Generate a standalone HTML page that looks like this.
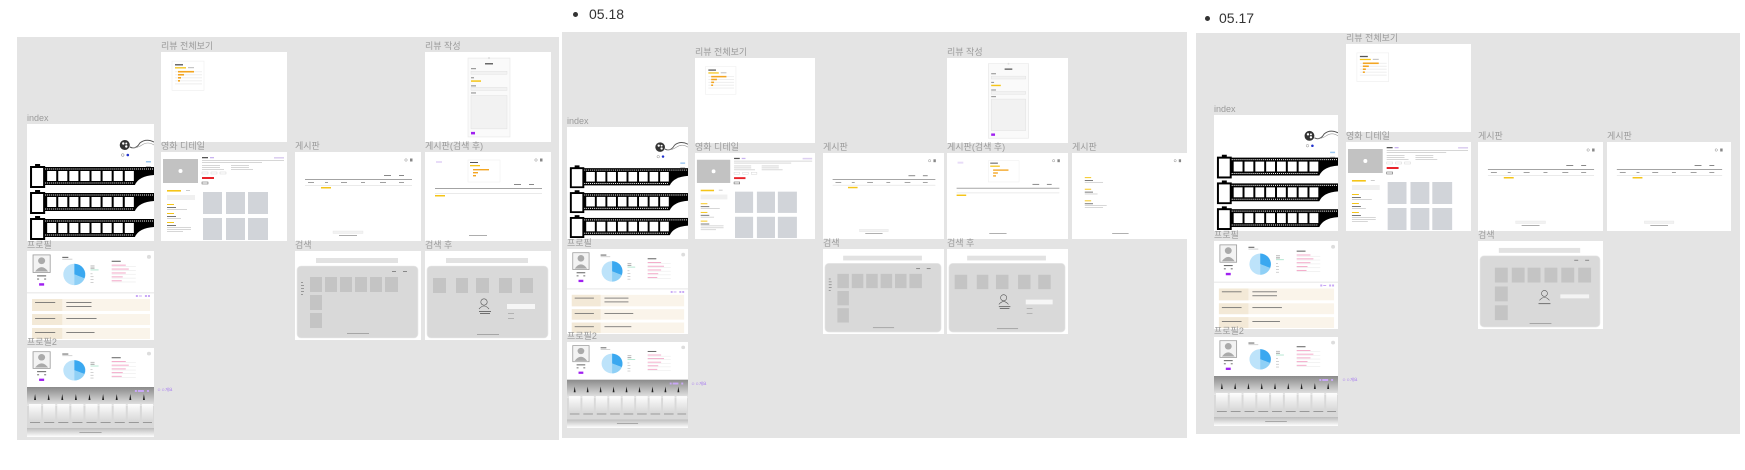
<!DOCTYPE html>
<html><head><meta charset="utf-8">
<style>
html,body{margin:0;padding:0;background:#fff;}
body{width:1745px;height:470px;position:relative;overflow:hidden;font-family:"Liberation Sans","Noto Sans CJK KR",sans-serif;}
.p{position:absolute;background:#e4e4e4;}
.f{position:absolute;background:#fff;}
.f svg{display:block;width:100%;height:100%;}
.l{position:absolute;font-size:9px;line-height:9px;color:#9a9a9a;white-space:nowrap;margin-top:-1px;}
.b{position:absolute;font-size:14px;color:#333;line-height:14px;}
.dot{position:absolute;width:5px;height:5px;border-radius:50%;background:#333;}
.s{position:absolute;font-size:4px;color:#a070f0;}
</style></head><body>
<svg width="0" height="0" style="position:absolute">
<defs>
<linearGradient id="g1" x1="0" y1="0" x2="0" y2="1"><stop offset="0" stop-color="#8a8a8a"/><stop offset="1" stop-color="#e8e8e8"/></linearGradient>
<linearGradient id="g2" x1="0" y1="0" x2="0" y2="1"><stop offset="0" stop-color="#fdfdfd"/><stop offset="1" stop-color="#d8d8d8"/></linearGradient>
<linearGradient id="g3" x1="0" y1="0" x2="0" y2="1"><stop offset="0" stop-color="#bdbdbd"/><stop offset="1" stop-color="#fff"/></linearGradient>
<symbol id="row" viewBox="0 0 126 24">
<rect x="4" y="3" width="13" height="20" fill="#fff" stroke="#000" stroke-width="2"/>
<rect x="8" y="0" width="5" height="3" fill="#000"/>
<rect x="17" y="3" width="109" height="18" fill="#000"/>
<line x1="18" y1="5" x2="126" y2="5" stroke="#fff" stroke-width="1" stroke-dasharray="1 1"/>
<line x1="18" y1="19" x2="106" y2="19" stroke="#fff" stroke-width="1" stroke-dasharray="1 1"/>
<g fill="#fff"><rect x="20" y="7" width="9" height="10"/><rect x="31" y="7" width="9" height="10"/><rect x="42" y="7" width="9" height="10"/><rect x="53" y="7" width="9" height="10"/><rect x="64" y="7" width="9" height="10"/><rect x="75" y="7" width="9" height="10"/><rect x="86" y="7" width="9" height="10"/><rect x="97" y="7" width="9" height="10"/></g>
<path d="M107 21 Q111 12 126 11 L126 24 L107 24 Z" fill="#fff"/>
</symbol>
<symbol id="idx" viewBox="0 0 126 117" preserveAspectRatio="none">
<circle cx="97" cy="21" r="5" fill="#333"/><circle cx="95.5" cy="19.5" r="1.2" fill="#fff"/><circle cx="98.5" cy="22.5" r="1.2" fill="#fff"/><circle cx="98.5" cy="19.5" r="1" fill="#fff"/>
<path d="M102 23 Q108 26 112 19 Q118 14 126 18" fill="none" stroke="#555" stroke-width="1"/>
<path d="M104 24 Q110 24 114 21 Q120 17 126 21" fill="none" stroke="#999" stroke-width="0.6"/>
<circle cx="95" cy="31" r="1.3" fill="none" stroke="#888" stroke-width="0.5"/><circle cx="100" cy="31" r="1.3" fill="#2233cc"/>
<rect x="118" y="37" width="5" height="1.5" fill="#9cc7ef"/><rect x="118" y="42" width="5" height="1" fill="#bbb"/>
<use href="#row" x="0" y="40" width="126" height="24"/>
<use href="#row" x="0" y="66" width="126" height="24"/>
<use href="#row" x="0" y="92" width="126" height="24"/>
</symbol>
<symbol id="rv" viewBox="0 0 126 89" preserveAspectRatio="none">
<rect x="11" y="9" width="32" height="29" fill="#fff" stroke="#eee" stroke-width="0.6"/>
<rect x="14" y="12" width="8" height="1.3" fill="#555"/>
<rect x="14" y="15" width="11" height="1.3" fill="#f5c518"/><rect x="27" y="15" width="6" height="1" fill="#bbb"/>
<g fill="#eee"><rect x="14" y="19" width="27" height="1"/><rect x="14" y="22" width="27" height="1"/><rect x="14" y="25" width="27" height="1"/><rect x="14" y="28" width="27" height="1"/><rect x="14" y="31" width="27" height="1"/></g>
<g fill="#f3a521"><rect x="17" y="18.7" width="16" height="1.6"/><rect x="17" y="21.7" width="6" height="1.6"/><rect x="17" y="24.7" width="3" height="1.6"/><rect x="17" y="27.7" width="2" height="1.6"/></g>
</symbol>
<symbol id="rw" viewBox="0 0 126 89" preserveAspectRatio="none">
<rect x="43" y="6" width="42" height="78" fill="#fafafa" stroke="#e6e6e6" stroke-width="0.6"/>
<circle cx="64" cy="6" r="1" fill="#ddd"/>
<rect x="60" y="11" width="8" height="1.3" fill="#555"/>
<g fill="#888"><rect x="46" y="16" width="5" height="1"/><rect x="46" y="25" width="3" height="1"/><rect x="46" y="33" width="5" height="1"/><rect x="46" y="40" width="5" height="1"/></g>
<rect x="46" y="19" width="36" height="3" fill="#f2f2f2" stroke="#ddd" stroke-width="0.4"/>
<rect x="46" y="28" width="10" height="1.5" fill="#f5c518"/>
<rect x="46" y="35" width="36" height="3" fill="#f2f2f2" stroke="#ddd" stroke-width="0.4"/>
<rect x="46" y="43" width="36" height="33" fill="#f2f2f2" stroke="#ddd" stroke-width="0.4"/>
<rect x="46" y="79" width="4" height="2.5" fill="#a020f0"/>
</symbol>
<symbol id="md" viewBox="0 0 126 89" preserveAspectRatio="none">
<rect x="2" y="7" width="35" height="24" fill="#c2c2c2"/><circle cx="19.5" cy="19" r="2" fill="#fff"/>
<rect x="41" y="5" width="6" height="1.3" fill="#555"/><rect x="49" y="5" width="4" height="1.3" fill="#c9b3f0"/><rect x="113" y="5" width="10" height="1.6" fill="#ddd0f0"/>
<g fill="#ccc"><rect x="41" y="8" width="82" height="0.8"/><rect x="41" y="10" width="60" height="0.8"/><rect x="41" y="13" width="18" height="0.8"/><rect x="70" y="13" width="18" height="0.8"/><rect x="41" y="15" width="18" height="0.8"/><rect x="70" y="15" width="18" height="0.8"/><rect x="41" y="17" width="22" height="0.8"/><rect x="70" y="17" width="22" height="0.8"/></g>
<g fill="none" stroke="#ccc" stroke-width="0.4"><rect x="41" y="20" width="6" height="2"/><rect x="50" y="20" width="6" height="2"/><rect x="59" y="20" width="6" height="2"/></g>
<rect x="41" y="25" width="12" height="2" fill="#e8222a"/>
<rect x="41" y="30" width="6" height="2" fill="none" stroke="#555" stroke-width="0.5"/>
<rect x="6" y="38" width="14" height="1.6" fill="#f5c518"/><rect x="25" y="38" width="4" height="1" fill="#ccc"/>
<rect x="6" y="43" width="28" height="5" fill="#f0f0f0"/>
<g fill="#f5c518"><rect x="6" y="52" width="7" height="1"/><rect x="6" y="61" width="7" height="1"/><rect x="6" y="70" width="7" height="1"/></g>
<g fill="#777"><rect x="6" y="55" width="9" height="1"/><rect x="6" y="64" width="9" height="1"/><rect x="6" y="73" width="9" height="1"/></g>
<g fill="#ccc"><rect x="6" y="57" width="20" height="0.8"/><rect x="6" y="66" width="14" height="0.8"/><rect x="6" y="75" width="24" height="0.8"/><rect x="6" y="77" width="24" height="0.8"/><rect x="6" y="79" width="16" height="0.8"/></g>
<g fill="#d1d4d9"><rect x="42" y="40" width="19" height="22"/><rect x="65" y="40" width="19" height="22"/><rect x="87" y="40" width="20" height="22"/><rect x="42" y="66" width="19" height="22"/><rect x="65" y="66" width="19" height="22"/><rect x="87" y="66" width="20" height="22"/></g>
</symbol>
<symbol id="bd" viewBox="0 0 126 89" preserveAspectRatio="none">
<circle cx="111" cy="8" r="1.2" fill="none" stroke="#888" stroke-width="0.5"/><rect x="115" y="6.5" width="2.5" height="3" fill="#888"/>
<rect x="89" y="23" width="7" height="1" fill="#888"/><rect x="104" y="23" width="5" height="1" fill="#888"/>
<rect x="10" y="27" width="107" height="0.9" fill="#999"/>
<g fill="#888"><rect x="13" y="30" width="6" height="0.8"/><rect x="30" y="30" width="3" height="0.8"/><rect x="46" y="30" width="6" height="0.8"/><rect x="66" y="30" width="4" height="0.8"/><rect x="85" y="30" width="6" height="0.8"/><rect x="104" y="30" width="5" height="0.8"/></g>
<rect x="10" y="33" width="107" height="0.6" fill="#ddd"/>
<rect x="26" y="35" width="10" height="1.5" fill="#f5c518"/>
<rect x="38" y="79" width="30" height="2.5" fill="#f2f2f2" stroke="#ddd" stroke-width="0.3"/>
<rect x="44" y="83" width="18" height="0.8" fill="#999"/>
</symbol>
<symbol id="bds" viewBox="0 0 126 89" preserveAspectRatio="none">
<circle cx="111" cy="8" r="1.2" fill="none" stroke="#888" stroke-width="0.5"/><rect x="115" y="6.5" width="2.5" height="3" fill="#888"/>
<rect x="11" y="9" width="6" height="2" fill="#e8dcf8"/>
<rect x="43" y="8" width="32" height="22" fill="#fff" stroke="#eee" stroke-width="0.5"/>
<rect x="45" y="10" width="8" height="1" fill="#555"/><rect x="45" y="13" width="10" height="1.3" fill="#f5c518"/>
<g fill="#f3a521"><rect x="48" y="17" width="16" height="1.4"/><rect x="48" y="20" width="5" height="1.4"/><rect x="48" y="23" width="3" height="1.4"/></g>
<rect x="89" y="32" width="7" height="1" fill="#888"/><rect x="104" y="32" width="5" height="1" fill="#888"/>
<rect x="10" y="36" width="107" height="0.9" fill="#999"/>
<rect x="10" y="41" width="107" height="0.6" fill="#ddd"/>
<rect x="10" y="43" width="10" height="1.5" fill="#f5c518"/>
<rect x="44" y="83" width="18" height="0.8" fill="#999"/>
</symbol>
<symbol id="bd3" viewBox="0 0 126 89" preserveAspectRatio="none">
<circle cx="113" cy="8" r="1.2" fill="none" stroke="#888" stroke-width="0.5"/><rect x="117" y="6.5" width="2.5" height="3" fill="#888"/>
<g fill="#f5c518"><rect x="14" y="25" width="7" height="1"/><rect x="14" y="37" width="7" height="1"/><rect x="14" y="49" width="7" height="1"/></g>
<g fill="#777"><rect x="14" y="28" width="9" height="1"/><rect x="14" y="40" width="9" height="1"/><rect x="14" y="52" width="9" height="1"/></g>
<g fill="#ccc"><rect x="14" y="30" width="20" height="0.8"/><rect x="14" y="42" width="14" height="0.8"/><rect x="14" y="54" width="24" height="0.8"/><rect x="14" y="56" width="20" height="0.8"/></g>
<rect x="44" y="83" width="18" height="0.8" fill="#999"/>
</symbol>
<symbol id="sr" viewBox="0 0 126 89" preserveAspectRatio="none">
<rect x="21" y="7" width="82" height="5" fill="#e2e2e2"/>
<rect x="2" y="15" width="121" height="72" rx="4" fill="#d9d9d9" stroke="#eaeaea" stroke-width="0.6"/>
<rect x="97" y="20" width="4" height="1" fill="#888"/><rect x="108" y="20" width="4" height="1" fill="#888"/>
<g fill="#888"><rect x="6" y="31" width="2" height="0.8"/><rect x="6" y="34" width="3" height="0.8"/><rect x="6" y="37" width="3" height="0.8"/><rect x="6" y="40" width="3" height="0.8"/><rect x="6" y="43" width="2" height="0.8"/></g>
<g fill="#c4c4c4"><rect x="15" y="26" width="12" height="15"/><rect x="30" y="26" width="12" height="15"/><rect x="45" y="26" width="12" height="15"/><rect x="60" y="26" width="12" height="15"/><rect x="75" y="26" width="12" height="15"/><rect x="90" y="26" width="13" height="15"/><rect x="15" y="44" width="12" height="15"/><rect x="15" y="62" width="12" height="15"/></g>
<rect x="52" y="82" width="22" height="0.8" fill="#999"/>
</symbol>
<symbol id="sr3" viewBox="0 0 126 89" preserveAspectRatio="none">
<rect x="21" y="7" width="82" height="5" fill="#e2e2e2"/>
<rect x="2" y="15" width="121" height="72" rx="4" fill="#d9d9d9" stroke="#eaeaea" stroke-width="0.6"/>
<rect x="97" y="19" width="4" height="1" fill="#888"/><rect x="108" y="19" width="4" height="1" fill="#888"/>
<g fill="#c4c4c4"><rect x="17" y="27" width="13" height="15"/><rect x="34" y="27" width="13" height="15"/><rect x="50" y="27" width="13" height="15"/><rect x="67" y="27" width="13" height="15"/><rect x="84" y="27" width="13" height="15"/><rect x="101" y="27" width="13" height="15"/><rect x="17" y="46" width="13" height="15"/><rect x="17" y="65" width="13" height="15"/></g>
<circle cx="67" cy="53" r="3" fill="none" stroke="#555" stroke-width="0.6"/><path d="M62 60 Q67 54 72 60" fill="none" stroke="#555" stroke-width="0.6"/>
<rect x="61" y="63" width="12" height="0.8" fill="#555"/>
<rect x="83" y="54" width="29" height="4" fill="#f4f4f4"/>
<rect x="52" y="83" width="22" height="0.8" fill="#999"/>
</symbol>
<symbol id="srs" viewBox="0 0 126 89" preserveAspectRatio="none">
<rect x="21" y="7" width="82" height="5" fill="#e2e2e2"/>
<rect x="2" y="15" width="121" height="72" rx="4" fill="#d9d9d9" stroke="#eaeaea" stroke-width="0.6"/>
<g fill="#c4c4c4"><rect x="8" y="27" width="13" height="15"/><rect x="31" y="27" width="12" height="15"/><rect x="51" y="27" width="13" height="15"/><rect x="74" y="27" width="13" height="15"/><rect x="95" y="27" width="13" height="15"/></g>
<circle cx="59" cy="51" r="3.2" fill="none" stroke="#555" stroke-width="0.6"/><path d="M54 58 Q59 52 64 58" fill="none" stroke="#555" stroke-width="0.6"/>
<rect x="54" y="60" width="12" height="0.8" fill="#555"/><rect x="55" y="62" width="10" height="0.8" fill="#555"/>
<rect x="82" y="53" width="28" height="5" fill="#f6f6f6"/>
<g fill="#999"><rect x="83" y="62" width="6" height="0.6"/><rect x="83" y="67" width="6" height="0.6"/></g>
<rect x="52" y="83" width="22" height="0.8" fill="#999"/>
</symbol>
<symbol id="pft" viewBox="0 0 126 42" preserveAspectRatio="none">
<rect x="6" y="4" width="17" height="18" fill="#f3f3f3" stroke="#999" stroke-width="0.8"/>
<circle cx="14.5" cy="10" r="3.5" fill="#aaa"/><path d="M8 21 Q14.5 12 21 21 Z" fill="#aaa"/>
<rect x="10" y="25" width="9" height="1" fill="#555"/>
<g fill="#999"><rect x="10" y="28" width="2" height="1.5"/><rect x="17" y="28" width="2" height="1.5"/></g>
<rect x="12" y="33" width="5" height="2.5" fill="#a020f0"/>
<rect x="35" y="6" width="6" height="1" fill="#555"/><rect x="35" y="8" width="10" height="0.7" fill="#bbb"/>
<circle cx="47" cy="24" r="11" fill="#bde3fa"/>
<path d="M47 24 L47 13 A11 11 0 0 1 57 28 Z" fill="#3aa8f0"/>
<path d="M47 24 L57 28 A11 11 0 0 1 47 35 Z" fill="#8fd0f6"/>
<g fill="#999"><rect x="63" y="15" width="4" height="0.7"/><rect x="63" y="17" width="4" height="1"/></g><rect x="63" y="19" width="8" height="0.8" fill="#9ee0c4"/>
<g fill="#bbb"><rect x="63" y="23" width="2" height="0.7"/><rect x="63" y="26" width="3" height="0.7"/><rect x="63" y="29" width="3" height="0.7"/><rect x="63" y="32" width="3" height="0.7"/></g>
<rect x="84" y="10" width="9" height="1" fill="#555"/>
<g fill="#f3a8c8"><rect x="84" y="14" width="14" height="1"/><rect x="84" y="18" width="17" height="1"/><rect x="84" y="22" width="14" height="1"/><rect x="84" y="26" width="11" height="1"/><rect x="84" y="30" width="10" height="1"/></g>
<g fill="#e6e6e6"><rect x="84" y="15.5" width="24" height="0.5"/><rect x="84" y="19.5" width="24" height="0.5"/><rect x="84" y="23.5" width="24" height="0.5"/><rect x="84" y="27.5" width="24" height="0.5"/><rect x="84" y="31.5" width="24" height="0.5"/></g>
<circle cx="121" cy="6" r="2" fill="#ddd"/>
</symbol>
<symbol id="pf" viewBox="0 0 126 89" preserveAspectRatio="none">
<use href="#pft" x="0" y="0" width="126" height="41"/>
<rect x="0" y="41" width="126" height="1.5" fill="#eee"/>
<g fill="#c9a8f6"><rect x="108" y="44" width="2" height="2"/><rect x="111" y="44.5" width="3" height="1"/><rect x="117" y="44" width="2" height="2"/><rect x="120" y="44" width="2" height="2"/></g>
<rect x="5" y="48" width="117" height="12" fill="#faf4ea"/><rect x="5" y="48" width="30" height="12" fill="#f3e9d7"/>
<rect x="5" y="63" width="117" height="11" fill="#faf4ea"/><rect x="5" y="63" width="30" height="11" fill="#f3e9d7"/>
<rect x="5" y="77" width="117" height="11" fill="#faf4ea"/><rect x="5" y="77" width="30" height="11" fill="#f3e9d7"/>
<g fill="#666"><rect x="8" y="51" width="20" height="0.8"/><rect x="8" y="67" width="20" height="0.8"/><rect x="8" y="81" width="20" height="0.8"/><rect x="39" y="51" width="25" height="0.8"/><rect x="39" y="55" width="25" height="0.8"/><rect x="39" y="67" width="30" height="0.8"/><rect x="39" y="81" width="28" height="0.8"/></g>
</symbol>
<symbol id="pf2" viewBox="0 0 126 89" preserveAspectRatio="none">
<use href="#pft" x="0" y="0" width="126" height="39"/>
<rect x="0" y="39" width="126" height="19" fill="url(#g1)"/>
<rect x="0" y="58" width="126" height="22" fill="#d9d9d9"/>
<rect x="0" y="80" width="126" height="9" fill="url(#g3)"/>
<g fill="#c9a8f6"><rect x="107" y="42" width="2" height="2"/><rect x="110" y="42" width="6" height="2"/><rect x="119" y="42" width="2" height="2"/></g>
<g fill="#222"><path d="M7 52 L8 46 L9 52 Z"/><path d="M20.5 52 L21.5 46 L22.5 52 Z"/><path d="M34 52 L35 46 L36 52 Z"/><path d="M47.5 52 L48.5 46 L49.5 52 Z"/><path d="M61 52 L62 46 L63 52 Z"/><path d="M74.5 52 L75.5 46 L76.5 52 Z"/><path d="M88 52 L89 46 L90 52 Z"/><path d="M101.5 52 L102.5 46 L103.5 52 Z"/><path d="M115 52 L116 46 L117 52 Z"/></g>
<g fill="url(#g2)"><rect x="2" y="56" width="12" height="17"/><rect x="16" y="56" width="12" height="17"/><rect x="30" y="56" width="12" height="17"/><rect x="44" y="56" width="12" height="17"/><rect x="58" y="56" width="12" height="17"/><rect x="72" y="56" width="12" height="17"/><rect x="86" y="56" width="12" height="17"/><rect x="100" y="56" width="12" height="17"/><rect x="114" y="56" width="11" height="17"/></g>
<g fill="#999"><rect x="3" y="74" width="10" height="1"/><rect x="17" y="74" width="10" height="1"/><rect x="31" y="74" width="10" height="1"/><rect x="45" y="74" width="10" height="1"/><rect x="59" y="74" width="10" height="1"/><rect x="73" y="74" width="10" height="1"/><rect x="87" y="74" width="10" height="1"/><rect x="101" y="74" width="10" height="1"/><rect x="115" y="74" width="9" height="1"/></g>
<rect x="52" y="84" width="22" height="0.8" fill="#999"/>
</symbol>
</defs></svg>

<!-- Panel 1 -->
<div class="p" style="left:17px;top:37px;width:542px;height:403px"></div>
<div class="l" style="left:27px;top:115px">index</div>
<div class="f" style="left:27px;top:124px;width:127px;height:117px"><svg><use href="#idx" width="100%" height="100%"/></svg></div>
<div class="l" style="left:161px;top:43px">리뷰 전체보기</div>
<div class="f" style="left:161px;top:52px;width:126px;height:90px"><svg><use href="#rv" width="100%" height="100%"/></svg></div>
<div class="l" style="left:425px;top:43px">리뷰 작성</div>
<div class="f" style="left:425px;top:52px;width:126px;height:90px"><svg><use href="#rw" width="100%" height="100%"/></svg></div>
<div class="l" style="left:161px;top:143px">영화 디테일</div>
<div class="f" style="left:161px;top:152px;width:126px;height:89px"><svg><use href="#md" width="100%" height="100%"/></svg></div>
<div class="l" style="left:295px;top:143px">게시판</div>
<div class="f" style="left:295px;top:152px;width:126px;height:89px"><svg><use href="#bd" width="100%" height="100%"/></svg></div>
<div class="l" style="left:425px;top:143px">게시판(검색 후)</div>
<div class="f" style="left:425px;top:152px;width:126px;height:89px"><svg><use href="#bds" width="100%" height="100%"/></svg></div>
<div class="l" style="left:27px;top:242px">프로필</div>
<div class="f" style="left:27px;top:251px;width:127px;height:89px"><svg><use href="#pf" width="100%" height="100%"/></svg></div>
<div class="l" style="left:295px;top:242px">검색</div>
<div class="f" style="left:295px;top:251px;width:126px;height:89px"><svg><use href="#sr" width="100%" height="100%"/></svg></div>
<div class="l" style="left:425px;top:242px">검색 후</div>
<div class="f" style="left:425px;top:251px;width:126px;height:89px"><svg><use href="#srs" width="100%" height="100%"/></svg></div>
<div class="l" style="left:27px;top:339px">프로필2</div>
<div class="f" style="left:27px;top:348px;width:127px;height:89px"><svg><use href="#pf2" width="100%" height="100%"/></svg></div>
<div class="s" style="left:157px;top:387px">☺☺개요</div>

<!-- Panel 2 -->
<div class="dot" style="left:573px;top:12px"></div>
<div class="b" style="left:589px;top:7px">05.18</div>
<div class="p" style="left:562px;top:32px;width:625px;height:406px"></div>
<div class="l" style="left:567px;top:118px">index</div>
<div class="f" style="left:567px;top:127px;width:121px;height:112px"><svg><use href="#idx" width="100%" height="100%"/></svg></div>
<div class="l" style="left:695px;top:49px">리뷰 전체보기</div>
<div class="f" style="left:695px;top:58px;width:120px;height:85px"><svg><use href="#rv" width="100%" height="100%"/></svg></div>
<div class="l" style="left:947px;top:49px">리뷰 작성</div>
<div class="f" style="left:947px;top:58px;width:121px;height:85px"><svg><use href="#rw" width="100%" height="100%"/></svg></div>
<div class="l" style="left:695px;top:144px">영화 디테일</div>
<div class="f" style="left:695px;top:153px;width:120px;height:86px"><svg><use href="#md" width="100%" height="100%"/></svg></div>
<div class="l" style="left:823px;top:144px">게시판</div>
<div class="f" style="left:823px;top:153px;width:121px;height:86px"><svg><use href="#bd" width="100%" height="100%"/></svg></div>
<div class="l" style="left:947px;top:144px">게시판(검색 후)</div>
<div class="f" style="left:947px;top:153px;width:121px;height:86px"><svg><use href="#bds" width="100%" height="100%"/></svg></div>
<div class="l" style="left:1072px;top:144px">게시판</div>
<div class="f" style="left:1072px;top:153px;width:115px;height:86px"><svg><use href="#bd3" width="100%" height="100%"/></svg></div>
<div class="l" style="left:567px;top:240px">프로필</div>
<div class="f" style="left:567px;top:249px;width:121px;height:85px"><svg><use href="#pf" width="100%" height="100%"/></svg></div>
<div class="l" style="left:823px;top:240px">검색</div>
<div class="f" style="left:823px;top:249px;width:121px;height:85px"><svg><use href="#sr" width="100%" height="100%"/></svg></div>
<div class="l" style="left:947px;top:240px">검색 후</div>
<div class="f" style="left:947px;top:249px;width:121px;height:85px"><svg><use href="#srs" width="100%" height="100%"/></svg></div>
<div class="l" style="left:567px;top:333px">프로필2</div>
<div class="f" style="left:567px;top:342px;width:121px;height:86px"><svg><use href="#pf2" width="100%" height="100%"/></svg></div>
<div class="s" style="left:691px;top:381px">☺☺개요</div>

<!-- Panel 3 -->
<div class="dot" style="left:1205px;top:16px"></div>
<div class="b" style="left:1219px;top:11px">05.17</div>
<div class="p" style="left:1196px;top:33px;width:544px;height:401px"></div>
<div class="l" style="left:1346px;top:35px">리뷰 전체보기</div>
<div class="f" style="left:1346px;top:44px;width:125px;height:88px"><svg><use href="#rv" width="100%" height="100%"/></svg></div>
<div class="l" style="left:1214px;top:106px">index</div>
<div class="f" style="left:1214px;top:115px;width:124px;height:116px"><svg><use href="#idx" width="100%" height="100%"/></svg></div>
<div class="l" style="left:1346px;top:133px">영화 디테일</div>
<div class="f" style="left:1346px;top:142px;width:125px;height:89px"><svg><use href="#md" width="100%" height="100%"/></svg></div>
<div class="l" style="left:1478px;top:133px">게시판</div>
<div class="f" style="left:1478px;top:142px;width:125px;height:89px"><svg><use href="#bd" width="100%" height="100%"/></svg></div>
<div class="l" style="left:1607px;top:133px">게시판</div>
<div class="f" style="left:1607px;top:142px;width:124px;height:89px"><svg><use href="#bd" width="100%" height="100%"/></svg></div>
<div class="l" style="left:1214px;top:232px">프로필</div>
<div class="f" style="left:1214px;top:241px;width:124px;height:88px"><svg><use href="#pf" width="100%" height="100%"/></svg></div>
<div class="l" style="left:1478px;top:232px">검색</div>
<div class="f" style="left:1478px;top:241px;width:125px;height:88px"><svg><use href="#sr3" width="100%" height="100%"/></svg></div>
<div class="l" style="left:1214px;top:328px">프로필2</div>
<div class="f" style="left:1214px;top:337px;width:124px;height:89px"><svg><use href="#pf2" width="100%" height="100%"/></svg></div>
<div class="s" style="left:1342px;top:377px">☺☺개요</div>
</body></html>
